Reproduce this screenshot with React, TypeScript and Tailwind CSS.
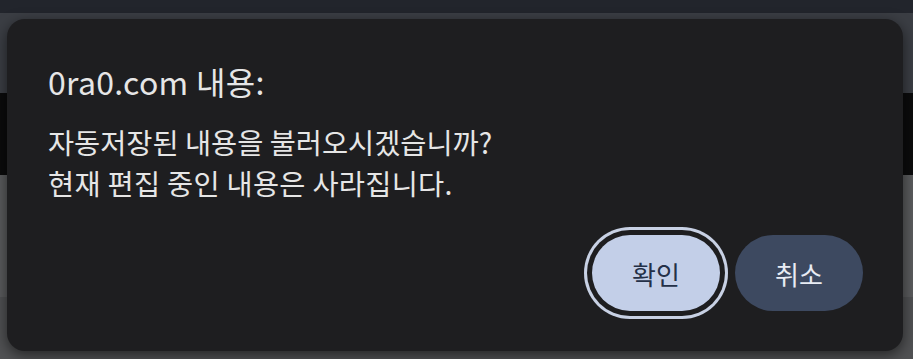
import React from 'react';

const FONT = '"Noto Sans CJK KR", "Noto Sans", sans-serif';

export default function App(): React.JSX.Element {
  return (
    <div className="relative h-[359px] w-[913px] overflow-hidden" style={{ fontFamily: FONT }}>
      {/* Page behind the dialog */}
      <div className="flex h-full flex-col">
        <div className="h-[13px] bg-[#22252c]" />
        <div className="h-[80px] bg-[#3b3e44]" />
        <div className="h-[82px] bg-[#0b0b0c]" />
        <div className="h-[122px] bg-[#5a5b5d]" />
        <div className="flex-1 bg-[#505153]" />
      </div>

      {/* Alert dialog */}
      <div className="absolute left-[7px] top-[19px] flex h-[332px] w-[896px] flex-col rounded-[18px] bg-[#1e1e20] pl-[41px] pr-[40px] pt-[42px] shadow-[0_4px_14px_rgba(0,0,0,0.55)]">
        <h2 className="text-[32px] leading-[40px] tracking-[0.3px] text-[#e6e6e6]">0ra0.com 내용:</h2>
        <div className="mt-[20px] text-[28.4px] leading-[41px] text-[#e6e6e6]">
          <p>자동저장된 내용을 불러오시겠습니까?</p>
          <p className="tracking-[0.3px]">현재 편집 중인 내용은 사라집니다.</p>
        </div>
        <div className="mt-auto mb-[40px] flex justify-end gap-[15px]">
          <button className="h-[76px] w-[128px] rounded-full bg-[#c3cfe8] text-[26px] text-[#243047] ring-[3px] ring-[#c8d1e4] ring-offset-[5px] ring-offset-[#1e1e20]">
            확인
          </button>
          <button className="h-[76px] w-[128px] rounded-full bg-[#3d4960] text-[26px] text-[#e8ecf4]">
            취소
          </button>
        </div>
      </div>
    </div>
  );
}
